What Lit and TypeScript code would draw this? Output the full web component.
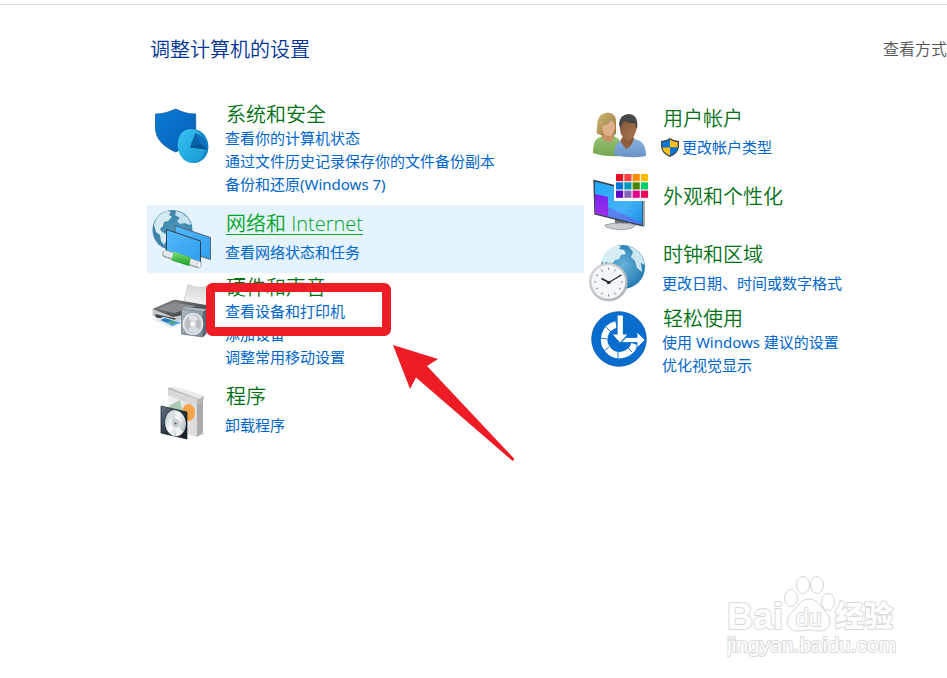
import { LitElement, html, css, svg, nothing, TemplateResult } from "lit";
import { customElement, property } from "lit/decorators.js";

interface Category {
  title: string;
  icon: string;
  links: string[];
  active?: boolean;
  shield?: boolean;
  marked?: boolean;
}

const leftColumn: Category[] = [
  {
    title: "系统和安全",
    icon: "security",
    links: ["查看你的计算机状态", "通过文件历史记录保存你的文件备份副本", "备份和还原(Windows 7)"],
  },
  { title: "网络和 Internet", icon: "network", links: ["查看网络状态和任务"], active: true },
  { title: "硬件和声音", icon: "hardware", links: ["查看设备和打印机", "添加设备", "调整常用移动设置"], marked: true },
  { title: "程序", icon: "programs", links: ["卸载程序"] },
];

const rightColumn: Category[] = [
  { title: "用户帐户", icon: "users", links: ["更改帐户类型"], shield: true },
  { title: "外观和个性化", icon: "display", links: [] },
  { title: "时钟和区域", icon: "clock", links: ["更改日期、时间或数字格式"] },
  { title: "轻松使用", icon: "ease", links: ["使用 Windows 建议的设置", "优化视觉显示"] },
];

const swatches = [
  "#e81123", "#ff4343", "#ff8c00", "#ffb900",
  "#0078d7", "#0099bc", "#498205", "#00cc6a",
  "#5c05c8", "#8764b8", "#e3008c", "#ea005e",
];

const ticks = [0, 30, 60, 90, 120, 150, 180, 210, 240, 270, 300, 330];

const icons: Record<string, TemplateResult> = {
  security: svg`
    <defs>
      <linearGradient id="sa" x1="0" y1="0" x2="1" y2="1"><stop offset="0" stop-color="#0a7ad6"/><stop offset="1" stop-color="#0560b4"/></linearGradient>
      <linearGradient id="sb" x1="0" y1="0" x2="1" y2="1"><stop offset="0" stop-color="#35c3f3"/><stop offset="1" stop-color="#1795cf"/></linearGradient>
    </defs>
    <path d="M3.500 9C11 9 17 7 23.700 4C30 7 36 9 43.700 9V23C43.700 34 35 42 23.700 47C12 42 3.500 34 3.500 23Z" fill="url(#sa)" stroke="#07529a" stroke-width=".7"/>
    <path d="M39 24C50 24 56.300 32 56.300 42C56.300 52 49 58 41 58C32 58 25.700 50 25.700 40C25.700 30 31 24 39 24Z" fill="url(#sb)"/>
    <path d="M39 24C50 24 56.300 32 56.300 42C56.300 52 49 58 41 58C49 56 53 50 53 42C53 32 47 25 39 24Z" fill="#168bc4"/>
    <path d="M43.500 28L38 42.500L55.500 44.500C57 37 51 31 43.500 28Z" fill="#0b70bd"/>
    <path d="M43.500 28L38 42.500L48 38.500Z" fill="#0862a8"/><path d="M38 42.500L48 38.500L55.500 44.500Z" fill="#075494"/>`,
  network: svg`
    <defs>
      <radialGradient id="na" cx=".6" cy=".55"><stop offset="0" stop-color="#4b9ec2"/><stop offset="1" stop-color="#3f82aa"/></radialGradient>
      <linearGradient id="nb" x1="0" y1="0" x2="1" y2="1"><stop offset="0" stop-color="#53b9fa"/><stop offset="1" stop-color="#2f9fee"/></linearGradient>
      <linearGradient id="nc" x1="0" y1="0" x2="0" y2="1"><stop offset="0" stop-color="#7de077"/><stop offset="1" stop-color="#1b9e27"/></linearGradient>
    </defs>
    <circle cx="20.500" cy="20" r="20" fill="url(#na)"/>
    <path d="M2 15C4 7 9 3 15 1L19 2L17 5L20 7L16 11L12 12L11 16L8 19L10 22L14 24L15 29L12 35L9 31L8 25L4 22Z" fill="#d4eaf2"/>
    <path d="M24 1L30 3L36 8L39 14L37 15L33 13L28 14L25 11L28 8L23 5Z" fill="#c5e2ee"/>
    <path d="M23 15.500L58.500 27.500V49.500L23 38Z" fill="url(#nb)" stroke="#4d5a63" stroke-width=".9"/>
    <path d="M14.500 19.500L48.500 31V52L14.500 42Z" fill="url(#nb)" stroke="#2b363e" stroke-width=".9"/>
    <path d="M14 44L46 54.500" stroke="#9da6a8" stroke-width="7.500" stroke-linecap="round"/>
    <path d="M14 43.500L46 54" stroke="#e5e9e9" stroke-width="5.500" stroke-linecap="round"/>
    <path d="M21.500 41.500L39 47.500L37 56L19.500 50.500Z" fill="url(#nc)"/>
    <ellipse cx="47" cy="54.500" rx="2" ry="3" fill="#f8fafa" stroke="#a8b0b2" stroke-width=".6"/>`,
  hardware: svg`
    <defs>
      <linearGradient id="ha" x1="0" y1="0" x2="0" y2="1"><stop offset="0" stop-color="#d6d6d6"/><stop offset="1" stop-color="#fbfbfb"/></linearGradient>
      <linearGradient id="hb" x1="0" y1="0" x2="1" y2="1"><stop offset="0" stop-color="#8d8f91"/><stop offset=".5" stop-color="#5c5e60"/><stop offset="1" stop-color="#353739"/></linearGradient>
      <linearGradient id="hc" x1="0" y1="0" x2="1" y2="1"><stop offset="0" stop-color="#a9b5bf"/><stop offset="1" stop-color="#7c8995"/></linearGradient>
    </defs>
    <path d="M31.500 25L36 6.500Q46 11 55 8V31Z" fill="url(#ha)" stroke="#c6c6c6" stroke-width=".6"/>
    <path d="M.5 31V38L21 44L54 37V28Z" fill="#c7cacc"/>
    <path d="M.5 31L20 22.500Q22 21.500 25 22L54 27V32L21 39Z" fill="url(#hb)"/>
    <path d="M5 31L22 24.500L44 28L22 35Z" fill="#8a8d8f"/>
    <path d="M3 36L24 40.500L22 43L4 39.500Z" fill="#404345"/>
    <path d="M3.500 42L12 39L31 44.500L20 49Z" fill="#edf4fa" stroke="#b5bfc8" stroke-width=".5"/>
    <path d="M8 42L13 40L21 42.500L15 45Z" fill="#277dbb"/><path d="M15 45L21 42.500L29 44.500L20 48Z" fill="#4aa5d8"/><path d="M17 44.500L20 43L24 44L20 46Z" fill="#4fa750"/>
    <path d="M29.500 31L51 33.500V59L29.500 56Z" fill="url(#hc)" stroke="#62707c" stroke-width=".7"/>
    <path d="M51 33.500L54.500 31V56L51 59Z" fill="#566672"/><path d="M29.500 31L33 29L54.500 31L51 33.500Z" fill="#a9b4bd"/>
    <ellipse cx="41" cy="46" rx="9.800" ry="10.500" fill="#cbd0d4" stroke="#edf0f2" stroke-width="1.200"/>
    <ellipse cx="41" cy="46" rx="7.500" ry="8.500" fill="#b8bec4"/><path d="M41 46L36 39Q43 35 46 41Z" fill="#e0e4e7"/><path d="M41 46L47 52Q42 57 36 52Z" fill="#d8dde0"/>
    <circle cx="41" cy="46" r="3" fill="#f3f5f6" stroke="#bcc3c8" stroke-width=".5"/>`,
  programs: svg`
    <defs>
      <linearGradient id="pa" x1="0" y1="0" x2="1" y2="0"><stop offset="0" stop-color="#f4f4f4"/><stop offset="1" stop-color="#dadada"/></linearGradient>
      <linearGradient id="pb" x1="0" y1="0" x2="1" y2="1"><stop offset="0" stop-color="#687887"/><stop offset=".5" stop-color="#27333e"/><stop offset="1" stop-color="#141e29"/></linearGradient>
      <linearGradient id="pc" x1="0" y1="0" x2="1" y2="1"><stop offset="0" stop-color="#b3bdc1"/><stop offset=".45" stop-color="#fafcfc"/><stop offset="1" stop-color="#98a6aa"/></linearGradient>
    </defs>
    <path d="M16 10L45 20V54L16 46Z" fill="url(#pa)"/>
    <path d="M45 20L51 17V51L45 54Z" fill="#aaaaaa"/><path d="M51 50L55 50L45 54Z" fill="#e8e8e8"/>
    <path d="M16 5L22 4L52 13L51 20L45 22L16 12Z" fill="#b5b5b5"/><path d="M18 5L22 4L52 13L47 16Z" fill="#ececec"/><path d="M16 6L45 16V22L16 12Z" fill="#d8d8d8"/>
    <path d="M17 23L28 17L32 37L20 40Z" fill="#a9c9b4"/><ellipse cx="36.500" cy="29.500" rx="6.500" ry="8.500" fill="#f3a449"/>
    <path d="M9 23L35 29V56L9 50Z" fill="url(#pb)" stroke="#111a22" stroke-width=".7"/>
    <ellipse cx="23.500" cy="40.300" rx="10.300" ry="13" transform="rotate(-8 23.500 40.300)" fill="url(#pc)"/>
    <path d="M23.500 40L15 32Q19 27 23 27Z" fill="#d6dee0"/><path d="M23.500 40L31 49Q27 53 24 53Z" fill="#eef4f4"/>
    <ellipse cx="23.500" cy="40.300" rx="3" ry="3.800" fill="#dce2e4" stroke="#8a989e" stroke-width=".6"/><ellipse cx="23.500" cy="40.300" rx="1.200" ry="1.500" fill="#65747e"/>`,
  users: svg`
    <defs>
      <linearGradient id="ua" x1="0" y1="0" x2="0" y2="1"><stop offset="0" stop-color="#9cc377"/><stop offset="1" stop-color="#75a64e"/></linearGradient>
      <linearGradient id="ub" x1="0" y1="0" x2="0" y2="1"><stop offset="0" stop-color="#8cb4de"/><stop offset="1" stop-color="#6793c6"/></linearGradient>
      <linearGradient id="uc" x1="0" y1="0" x2="1" y2="1"><stop offset="0" stop-color="#d3bb78"/><stop offset="1" stop-color="#94733a"/></linearGradient>
      <linearGradient id="ud" x1="0" y1="0" x2="1" y2="1"><stop offset="0" stop-color="#7c5238"/><stop offset="1" stop-color="#ad7850"/></linearGradient>
    </defs>
    <path d="M4 48Q4 35 9 33L16 30H23L30 34L32 51Q16 52 4 48Z" fill="url(#ua)"/>
    <path d="M12 30H25Q24 38 19 37Q14 36 12 30Z" fill="#c88f61"/>
    <path d="M17 8C24 7 28 11 27 19C27 27 28 29 25 30H12C8 29 7 29 8 24C8 16 9 9 17 8Z" fill="url(#uc)"/>
    <path d="M13 21Q20 20 22 15Q26 17 26 22Q25 31 20 31Q13 31 13 21Z" fill="#ddb08a"/>
    <path d="M25 50Q25 39 31 36L38 33H44L51 36Q57 39 57 51Q42 54 25 50Z" fill="url(#ub)"/>
    <path d="M31 36L35 30H44L45 34Q42 43 37 44Z" fill="#8d5d3e"/>
    <path d="M31 20Q31 10 40 10Q48 11 48 21Q47 33 39 35Q32 33 31 25Z" fill="url(#ud)"/>
    <path d="M30 19Q31 9 40 9Q50 10 48 24Q46 22 46 18Q40 19 35 16Q33 20 31 23Z" fill="#484745"/>`,
  display: svg`
    <defs>
      <linearGradient id="da" x1="0" y1="0" x2="1" y2="1"><stop offset="0" stop-color="#20a6f5"/><stop offset=".6" stop-color="#45b3fb"/><stop offset="1" stop-color="#168be0"/></linearGradient>
      <linearGradient id="db" x1="0" y1="0" x2="0" y2="1"><stop offset="0" stop-color="#7825f1"/><stop offset="1" stop-color="#9d2fe7"/></linearGradient>
    </defs>
    <path d="M26 46L39 49V54H26Z" fill="#6b7277"/>
    <path d="M16 52Q29 48 47 52L43 55Q31 59 17 54Z" fill="#c8cdd0" stroke="#81898e" stroke-width=".7"/>
    <path d="M5 7.500L54 20V53L6 41Z" fill="url(#da)" stroke="#333d45" stroke-width="1.300"/>
    <path d="M6 21L19 24V43.500L6 40.200Z" fill="url(#db)"/><path d="M19 43.500V34L53 50V52Z" fill="#6a62e6" opacity=".6"/>
    <path d="M54 20L56 21V53H54Z" fill="#a2a9ad"/>
    <rect x="25" y="0" width="35" height="28" fill="#fff"/>
    ${swatches.map((c, i) => svg`<rect x=${27 + (i % 4) * 8.3} y=${1 + Math.floor(i / 4) * 8.3} width="7.200" height="7.200" fill=${c}/>`)}`,
  clock: svg`
    <defs>
      <radialGradient id="ca" cx=".5" cy=".45"><stop offset="0" stop-color="#67b4dc"/><stop offset="1" stop-color="#297fb4"/></radialGradient>
      <linearGradient id="cb" x1="0" y1="0" x2="1" y2="1"><stop offset="0" stop-color="#e0e3e6"/><stop offset="1" stop-color="#a3abb3"/></linearGradient>
    </defs>
    <circle cx="34" cy="26" r="22" fill="url(#ca)"/>
    <path d="M13 19Q16 9 26 5L32 5L30 8L35 9L37 13L32 14L30 18L26 19L23 23L17 21L14 24Z" fill="#d8edf4"/>
    <path d="M39 5L47 8L53 15L56 24L52 22L53 31L48 27L46 20L42 16L44 11Z" fill="#cde7f1"/>
    <circle cx="19.500" cy="41" r="19" fill="url(#cb)" stroke="#a0a8af" stroke-width=".5"/><circle cx="19.500" cy="41" r="16.800" fill="#f4f6f8"/>
    ${ticks.map((a) => svg`<path d="M19.500 26.500V29" transform=${`rotate(${a} 19.5 41)`} stroke="#737a80" stroke-width=".8"/>`)}
    <path d="M20 41.500L12.500 37.500" stroke="#20262c" stroke-width="1.700"/><path d="M18 42.500L32.500 34" stroke="#20262c" stroke-width="1.100"/><circle cx="20" cy="41.500" r="1.500" fill="#20262c"/>`,
  ease: svg`
    <circle cx="30" cy="30" r="27.300" fill="#086dcc" stroke="#0759a8" stroke-width=".8"/>
    <path d="M27 15.500A15.500 15.500 0 1 0 45.500 35" fill="none" stroke="#fff" stroke-width="6.500"/>
    <path d="M17 18L22 23M10.500 29L18 30M15 42L20 38M29 50V43M43 43L38 38" stroke="#086dcc" stroke-width=".9"/>
    <path d="M28 6H34.500V25H39.500L31 34.500L22.500 25H28Z" fill="#fff" stroke="#086dcc" stroke-width="1.200"/>
    <path d="M37 28.500H48V23L56 31L48 39V33.500H32Z" fill="#fff" stroke="#086dcc" stroke-width=".8"/>`,
};

const uacShield = svg`
  <path d="M9 0Q13 3 18 3V9Q17 16 9 19Q1 16 0 9V3Q5 3 9 0Z" fill="#3b454f"/>
  <path d="M9 1.500V9.500H1.300V4.200Q5.500 4 9 1.500Z" fill="#0b76d8"/><path d="M9 1.500Q12.500 4 16.700 4.200V9.500H9Z" fill="#ffbe1e"/>
  <path d="M1.300 9.500H9V17.600Q2.200 15 1.300 9.500Z" fill="#ffbe1e"/><path d="M9 9.500H16.700Q15.800 15 9 17.600Z" fill="#0b76d8"/>`;

@customElement("category-item")
export class CategoryItem extends LitElement {
  @property({ attribute: false }) item!: Category;

  static styles = css`
    :host { display: block; }
    .item { position: relative; box-sizing: border-box; display: flex; min-height: 68px; }
    .active { background: #e5f3ff; }
    .icon { flex: none; width: 60px; height: 60px; margin: 5px 13px 0 5px; overflow: visible; }
    .text { min-width: 0; padding: 5px 0; }
    .dense .text { padding: 1px 0 9px; }
    .bare .text { padding-top: 15px; }
    h2 { margin: 0 0 5px; padding: 2px 0 0 1px; font-family: "Open Sans", "Noto Sans CJK SC", sans-serif; font-size: 20px; line-height: 24px; font-weight: 350; }
    .dense h2 { margin-bottom: 0; }
    ul { margin: 0; padding: 0; list-style: none; }
    li { display: flex; align-items: center; font-size: 15px; line-height: 23px; font-weight: 400; white-space: nowrap; }
    a { color: #0066cc; text-decoration: none; }
    h2 a { color: #007012; white-space: nowrap; }
    .active h2 a { color: #00a526; text-decoration: underline; text-decoration-thickness: 1px; text-underline-offset: 3px; }
    .shield { flex: none; width: 18px; height: 19px; margin: 0 3px 0 -1px; }
    .mark { position: absolute; left: 59px; top: 10px; width: 310px; height: 180px; pointer-events: none; }
  `;

  render() {
    const { title, icon, links, active, shield, marked } = this.item;
    const density = links.length > 1 ? "dense" : links.length ? "" : "bare";
    return html`
      <section class="item ${density} ${active ? "active" : ""}">
        <svg class="icon" viewBox="0 0 60 60" aria-hidden="true">${icons[icon]}</svg>
        <div class="text">
          <h2><a href="#">${title}</a></h2>
          <ul>
            ${links.map((l) => html`<li>
              ${shield ? html`<svg class="shield" viewBox="0 0 18 19" aria-hidden="true">${uacShield}</svg>` : nothing}
              <a href="#">${l}</a>
            </li>`)}
          </ul>
        </div>
        ${marked ? html`<svg class="mark" viewBox="0 0 310 180" aria-hidden="true">
          <rect x="4.500" y="4.500" width="176" height="44" rx="2" fill="none" stroke="#ee1c24" stroke-width="9"/>
          <path d="M187 62L232 76L221 83L308 175.500Q309 178 306 177.500L210 94.500L204 106Z" fill="#ee1c24"/>
        </svg>` : nothing}
      </section>`;
  }
}

@customElement("app-root")
export class AppRoot extends LitElement {
  static styles = css`
    :host {
      display: flex;
      flex-direction: column;
      min-height: 100vh;
      box-sizing: border-box;
      overflow: hidden;
      padding-top: 4px;
      background: #fff;
      font-family: "Noto Sans", "Noto Sans CJK SC", sans-serif;
      font-weight: 350;
    }
    .top { display: flex; justify-content: space-between; align-items: center; height: 88px; padding-left: 150px; border-top: 1px solid #d9d9d9; }
    h1 { margin: 0; padding-top: 2px; font-size: 20px; line-height: 28px; font-weight: 350; color: #003399; }
    .view { font-size: 16px; line-height: 24px; color: #555; white-space: nowrap; }
    main { display: grid; grid-template-columns: 437fr 363fr; align-items: start; padding: 7px 0 0 147px; }
    footer { margin-top: auto; display: flex; justify-content: flex-end; padding: 0 46px 14px 0; }
    .logo { width: 174px; height: 90px; }
    .logo text { fill: #fff; stroke: #dadada; stroke-width: 2px; paint-order: stroke; stroke-linejoin: round; font-family: "Liberation Sans", "Noto Sans CJK SC", sans-serif; }
    .logo .brand { font-size: 36px; font-weight: 700; }
    .logo .cjk { font-size: 29px; font-weight: 900; }
    .logo .du { font-size: 23px; font-weight: 400; }
    .logo .site { font-size: 21px; font-weight: 400; }
    .paw { fill: #fff; stroke: #d6d6d6; stroke-width: 1; }
  `;

  render() {
    return html`
      <header class="top">
        <h1>调整计算机的设置</h1>
        <span class="view">查看方式</span>
      </header>
      <main>
        <div>${leftColumn.map((c) => html`<category-item .item=${c}></category-item>`)}</div>
        <div>${rightColumn.map((c) => html`<category-item .item=${c}></category-item>`)}</div>
      </main>
      <footer>
        <svg class="logo" viewBox="0 0 174 90" role="img" aria-label="Baidu 经验">
          <text class="brand" x="0" y="55">Bai</text>
          <g class="paw">
            <ellipse cx="64" cy="24" rx="6.500" ry="8.500"/><ellipse cx="76" cy="11" rx="6.500" ry="8.500"/>
            <ellipse cx="90" cy="11" rx="6.500" ry="8.500"/><ellipse cx="101" cy="28" rx="6.500" ry="8.500"/>
            <path d="M82 25C91 25 93 32 98 37C106 44 104 57 93 57C87 57 86 56 82 56C78 56 76 57 71 57C59 57 57 44 66 37C71 32 74 25 82 25Z"/>
          </g>
          <text class="du" x="69" y="52">du</text>
          <text class="cjk" x="108" y="53">经验</text>
          <text class="site" x="0" y="78">jingyan.baidu.com</text>
        </svg>
      </footer>`;
  }
}
